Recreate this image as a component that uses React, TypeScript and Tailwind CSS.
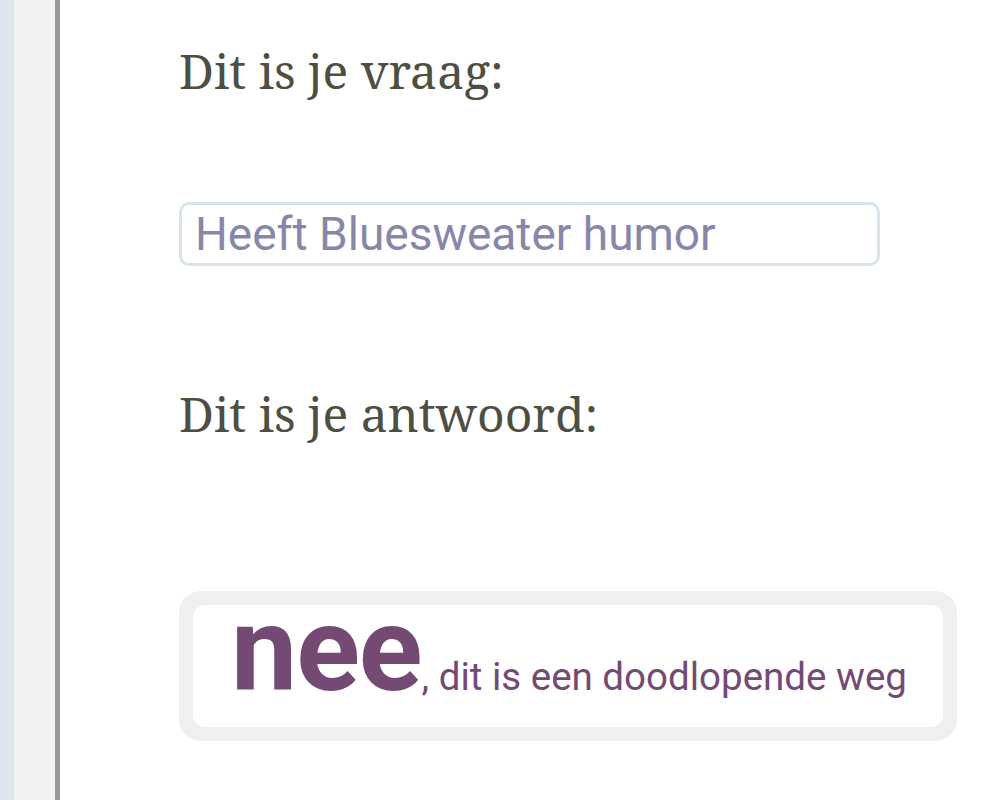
export default function App() {
  return (
    <div className="flex h-[800px] w-[998px] overflow-hidden bg-white">
      <div className="flex h-full shrink-0">
        <div className="w-[14px] bg-[#dde6ee]" />
        <div className="w-[41px] bg-[#f2f2f0]" />
        <div className="w-[5px] bg-[#9a9a9a]" />
      </div>
      <main className="flex flex-1 flex-col pl-[119px]">
        <h2 className="mt-[41px] font-['Noto_Serif','DejaVu_Serif',serif] text-[48px] leading-[60px] font-normal text-[#4e4e42]">
          Dit is je vraag:
        </h2>
        <div className="mt-[101px] w-[701px] rounded-[10px] border-[3px] border-[#d6e4ec] px-[13px] py-[5px]">
          <input
            readOnly
            value="Heeft Bluesweater humor"
            className="w-full bg-transparent font-['Roboto',sans-serif] text-[46px] leading-[48px] text-[#8787aa] outline-none"
          />
        </div>
        <h2 className="mt-[118px] font-['Noto_Serif','DejaVu_Serif',serif] text-[48px] leading-[60px] font-normal text-[#4e4e42]">
          Dit is je antwoord:
        </h2>
        <div className="mt-[147px] w-[778px] rounded-[22px] bg-[#efefef] p-[14px]">
          <div className="flex h-[122px] items-baseline rounded-[12px] bg-white pl-[38px] font-['Roboto',sans-serif] text-[#744a74]">
            <span className="text-[118px] leading-[90px] font-bold tracking-[-1px]">nee</span>
            <span className="text-[38.5px] leading-[40px]">, dit is een doodlopende weg</span>
          </div>
        </div>
      </main>
    </div>
  );
}
